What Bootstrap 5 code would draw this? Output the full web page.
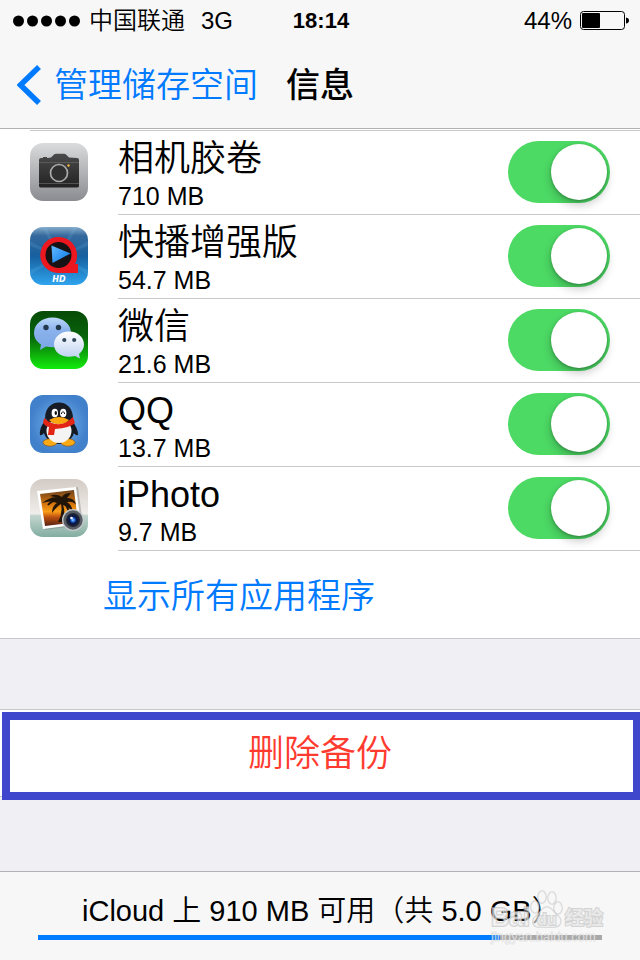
<!DOCTYPE html>
<html lang="zh-CN">
<head>
<meta charset="utf-8">
<meta name="viewport" content="width=device-width, initial-scale=1">
<title>信息</title>
<link href="https://cdn.jsdelivr.net/npm/bootstrap@5.3.0/dist/css/bootstrap.min.css" rel="stylesheet">
<style>
  body { font-family: "Liberation Sans", "Noto Sans CJK SC", sans-serif; font-weight: 350; color: #000; background: #efeff4; }
  a, a:hover { color: #007aff; text-decoration: none; }
  .top-area { background: #f7f7f7; border-bottom: 1px solid #b2b2b2; }
  .three-part { display: grid; grid-template-columns: 1fr auto 1fr; align-items: center; }
  .status-line { height: 40px; padding: 2px 11px 0 13px; font-size: 24px; line-height: 32px; }
  .status-time { font-size: 22px; font-weight: 700; }
  .title-line { height: 88px; padding: 2px 17px 0; font-size: 34px; line-height: 48px; }
  .back-link { gap: 12px; }
  .page-title { font-size: 34px; line-height: 48px; font-weight: 500; margin: 0; }
  .app-list { background: #fff; border-bottom: 1px solid #c8c7cc; padding-top: 1px; }
  .app-rows { border-top: 1px solid #c8c7cc; margin-left: 30px; }
  .app-row { gap: 30px; }
  .app-icon { width: 58px; height: 58px; display: block; margin-bottom: 2px; }
  .app-body { height: 84px; border-bottom: 1px solid #c8c7cc; padding-right: 30px; }
  .app-text { padding-top: 5px; }
  .app-name { font-size: 36px; line-height: 42px; }
  .app-size { font-size: 25px; line-height: 32px; }
  .big-switch.form-check-input { position: relative; display: block; float: none; width: 102px; height: 62px; margin: 0 0 2px; border: 0; border-radius: 31px; background: #d8d8d8; box-shadow: none; }
  .big-switch.form-check-input:checked { background: #4cd964; }
  .big-switch::before { content: ""; position: absolute; left: 3px; top: 3px; width: 56px; height: 56px; border-radius: 50%; background: #fff; box-shadow: 0 5px 10px rgba(0,0,0,.22), 0 1px 3px rgba(0,0,0,.25); }
  .big-switch:checked::before { left: 43px; }
  .show-all { padding: 21px 103px 18px; font-size: 34px; line-height: 48px; }
  .delete-area { margin-top: 70px; margin-bottom: 74px; background: #fff; border: solid #c8c7cc; border-width: 1px 0; }
  .delete-button { padding: 19px 18px 17px; font-size: 36px; line-height: 50px; font-weight: 350; color: #ff3b30; background: none; border: 0; }
  .focus-frame { position: absolute; inset: 2px 0 -4px 2px; border: 8px solid #3f48cc; border-right-width: 7px; pointer-events: none; }
  .storage { background: #f7f7f7; border-top: 1px solid #b2b2b2; padding: 19px 38px 20px; }
  .storage-text { font-size: 29px; line-height: 40px; padding-left: 44px; white-space: nowrap; }
  .storage .progress { height: 5px; margin-top: 4px; border-radius: 0; background: #a9a9a9; }
  .storage .progress-bar { background: #007aff; }
  .watermark { position: absolute; right: 34px; bottom: 11px; width: 116px; height: 60px; }
</style>
<script src="https://cdn.jsdelivr.net/npm/bootstrap@5.3.0/dist/js/bootstrap.bundle.min.js"></script>
</head>
<body class="d-flex flex-column min-vh-100">
<header class="top-area">
  <div class="status-line three-part">
    <div class="d-flex align-items-center">
      <svg width="68" height="12" aria-hidden="true"><circle cx="5.500" cy="6" r="5.500"/><circle cx="19.500" cy="6" r="5.500"/><circle cx="33.500" cy="6" r="5.500"/><circle cx="47.500" cy="6" r="5.500"/><circle cx="61.500" cy="6" r="5.500"/></svg>
      <span class="ms-2">中国联通</span><span class="ms-3">3G</span>
    </div>
    <div class="status-time">18:14</div>
    <div class="d-flex align-items-center justify-content-end gap-2">
      <span>44%</span>
      <svg width="49" height="20" aria-hidden="true"><rect x=".5" y=".5" width="44" height="18" rx="3" fill="none" stroke="#000"/><rect x="2" y="2" width="18" height="15" rx="1"/><path d="M46 6.500q3 .5 3 3t-3 3z"/></svg>
    </div>
  </div>
  <div class="title-line three-part">
    <a href="#" class="back-link d-flex align-items-center text-nowrap">
      <svg width="25" height="40" aria-hidden="true"><path d="M22 2 3.500 20 22 38" fill="none" stroke="#007aff" stroke-width="5.500"/></svg>管理储存空间</a>
    <h1 class="page-title">信息</h1>
  </div>
</header>
<main class="flex-grow-1">
  <section class="app-list">
    <div class="app-rows">
      <div class="app-row d-flex align-items-center">
        <svg class="app-icon" viewBox="0 0 58 58" aria-hidden="true">
          <defs>
            <linearGradient id="camBg" x2="0" y2="1"><stop stop-color="#dadbdc"/><stop offset="1" stop-color="#8b8c91"/></linearGradient>
            <linearGradient id="camBody" x2="0" y2="1"><stop stop-color="#4a4a4a"/><stop offset="1" stop-color="#222"/></linearGradient>
          </defs>
          <rect width="58" height="58" rx="13" fill="url(#camBg)"/>
          <path d="M13 15v-1h4v1l4-.5 3-3q1-.8 2-.8h8q1 0 2 .8l3 3 8 .5q2 0 2 2v26q0 1.500-2 1.500H11q-2 0-2-1.500V17q0-2 2-2z" fill="url(#camBody)"/>
          <path d="M9 19.500h40M9 40.500h40" stroke="#666" stroke-width=".7"/>
          <circle cx="29" cy="30" r="8.500" fill="#303030" stroke="#aaa" stroke-width="1.700"/><circle cx="38.500" cy="22.500" r="1.200" fill="#f4b63c"/>
        </svg>
        <div class="app-body d-flex align-items-center justify-content-between flex-grow-1">
          <div class="app-text"><label class="app-name d-block" for="sw1">相机胶卷</label><div class="app-size">710 MB</div></div>
          <div class="form-switch p-0 m-0"><input class="form-check-input big-switch" type="checkbox" role="switch" id="sw1" checked></div>
        </div>
      </div>
      <div class="app-row d-flex align-items-center">
        <svg class="app-icon" viewBox="0 0 58 58" aria-hidden="true">
          <defs>
            <linearGradient id="playBg" x2="0" y2="1"><stop stop-color="#86abc9"/><stop offset=".15" stop-color="#35699d"/><stop offset=".5" stop-color="#17609f"/><stop offset="1" stop-color="#2fa4ee"/></linearGradient>
            <linearGradient id="playTri" x2="1" y2="1"><stop stop-color="#64b9ff"/><stop offset="1" stop-color="#0877e8"/></linearGradient>
          </defs>
          <rect width="58" height="58" rx="13" fill="url(#playBg)"/>
          <path d="M29 30 0 14v5zM29 30 58 14v5zM29 30 0 43v5zM29 30l29 13v5zM29 30 12 0h5zM29 30 43 0h5z" fill="#8ad3ff" opacity=".12"/>
          <path d="M28.500 10a18.500 18.500 0 0 1 18 23q-.5 3-2 4h3.500v9H28a18 18 0 0 1 .5-36z" fill="#ed171f"/>
          <circle cx="28.500" cy="28" r="13" fill="#171314"/>
          <path d="m21.500 18.500 19 8-18 9.500z" fill="url(#playTri)"/>
          <text x="29" y="55" text-anchor="middle" font-size="8" font-weight="700" font-style="italic" font-family="DejaVu Sans, sans-serif" fill="#fff">HD</text>
        </svg>
        <div class="app-body d-flex align-items-center justify-content-between flex-grow-1">
          <div class="app-text"><label class="app-name d-block" for="sw2">快播增强版</label><div class="app-size">54.7 MB</div></div>
          <div class="form-switch p-0 m-0"><input class="form-check-input big-switch" type="checkbox" role="switch" id="sw2" checked></div>
        </div>
      </div>
      <div class="app-row d-flex align-items-center">
        <svg class="app-icon" viewBox="0 0 58 58" aria-hidden="true">
          <defs>
            <linearGradient id="chatBg" x2="0" y2="1"><stop stop-color="#064b08"/><stop offset=".45" stop-color="#08640a"/><stop offset="1" stop-color="#13ec0c"/></linearGradient>
            <linearGradient id="chatBlue" x2="0" y2="1"><stop stop-color="#bcd8fb"/><stop offset=".4" stop-color="#8ab2ec"/><stop offset="1" stop-color="#7ba6e5"/></linearGradient>
            <linearGradient id="chatWhite" x2="0" y2="1"><stop stop-color="#fff"/><stop offset="1" stop-color="#bdd1f2"/></linearGradient>
          </defs>
          <rect width="58" height="58" rx="13" fill="url(#chatBg)"/>
          <path d="M22.500 6.500C12 6.500 4 13 4 22c0 5 3 9 7 11.500L10 39l6-3.500c13 3 25-4 25-13.500 0-9-8-15.500-18.500-15.500z" fill="url(#chatBlue)"/>
          <circle cx="16" cy="16.500" r="2.700" fill="#21384f"/><circle cx="28.500" cy="16.500" r="2.700" fill="#21384f"/>
          <path d="M39 20.500c9 0 15 6 15 13 0 4-2 7-5 9.500l1 4.500-5-2.500c-12 3-21-3-21-11.500 0-7 6-13 15-13z" fill="url(#chatWhite)"/>
          <circle cx="34.300" cy="29" r="2.100" fill="#34495d"/><circle cx="44.200" cy="29" r="2.100" fill="#34495d"/>
        </svg>
        <div class="app-body d-flex align-items-center justify-content-between flex-grow-1">
          <div class="app-text"><label class="app-name d-block" for="sw3">微信</label><div class="app-size">21.6 MB</div></div>
          <div class="form-switch p-0 m-0"><input class="form-check-input big-switch" type="checkbox" role="switch" id="sw3" checked></div>
        </div>
      </div>
      <div class="app-row d-flex align-items-center">
        <svg class="app-icon" viewBox="0 0 58 58" aria-hidden="true">
          <defs><radialGradient id="qqBg"><stop stop-color="#78b3ee"/><stop offset="1" stop-color="#4180cb"/></radialGradient></defs>
          <rect width="58" height="58" rx="13" fill="url(#qqBg)"/>
          <path d="M15 26q-6 7-5 14 3 1 6-5zM42 26q6 7 6 14-3 1-7-5z" fill="#141922"/>
          <ellipse cx="29" cy="34" rx="15.500" ry="15" fill="#141922"/>
          <ellipse cx="20" cy="47.500" rx="7" ry="3.700" fill="#f9a914" stroke="#8c4c08" stroke-width=".6"/><ellipse cx="38" cy="47.500" rx="7" ry="3.700" fill="#f9a914" stroke="#8c4c08" stroke-width=".6"/>
          <ellipse cx="29" cy="36" rx="12.500" ry="12" fill="#f4f4f4"/>
          <path d="M29 7.500c-8 0-14 6-14 16q14 10 28 0c0-10-6-16-14-16z" fill="#181c25"/>
          <ellipse cx="24.800" cy="18" rx="3.200" ry="4.300" fill="#fff"/><ellipse cx="33.200" cy="18" rx="3.200" ry="4.300" fill="#fff"/>
          <ellipse cx="25.800" cy="18" rx="1.200" ry="2" fill="#111"/><path d="M31.500 19v-1q1.500-3 3 0v1" fill="none" stroke="#111"/>
          <path d="M14 23q15 13 29-1l2 6q-5 5-20 6l-1 6h-6l1-8q-4-1-6-4z" fill="#e32516"/>
          <path d="M19 25q10-6 20 0-4 4-10 4T19 25z" fill="#fca50e"/>
        </svg>
        <div class="app-body d-flex align-items-center justify-content-between flex-grow-1">
          <div class="app-text"><label class="app-name d-block" for="sw4">QQ</label><div class="app-size">13.7 MB</div></div>
          <div class="form-switch p-0 m-0"><input class="form-check-input big-switch" type="checkbox" role="switch" id="sw4" checked></div>
        </div>
      </div>
      <div class="app-row d-flex align-items-center">
        <svg class="app-icon" viewBox="0 0 58 58" aria-hidden="true">
          <defs>
            <linearGradient id="photoBg" x2="0" y2="1"><stop stop-color="#d3cbc5"/><stop offset=".6" stop-color="#f0eeea"/><stop offset=".63" stop-color="#c3d5ce"/><stop offset="1" stop-color="#82ada0"/></linearGradient>
            <linearGradient id="sunset" x2="0" y2="1"><stop stop-color="#70421d"/><stop offset=".4" stop-color="#d7770c"/><stop offset=".6" stop-color="#fb9e18"/><stop offset=".75" stop-color="#bd5011"/><stop offset="1" stop-color="#552112"/></linearGradient>
            <radialGradient id="lens"><stop stop-color="#a9dcff"/><stop offset=".25" stop-color="#226de5"/><stop offset=".5" stop-color="#08164a"/><stop offset="1" stop-color="#24272d"/></radialGradient>
          </defs>
          <rect width="58" height="58" rx="13" fill="url(#photoBg)"/>
          <path d="m9 13 39-5 5 38-38 5z" fill="#777" opacity=".4"/>
          <path d="m7 12 39-4 5 37-38 5z" fill="#fff"/>
          <path d="m10 15 34-4 4 32-33 4z" fill="url(#sunset)"/>
          <path d="M31 20q-7-5-19 4 9-3 15 0-5 3-5 10 5-7 9-9 2 9-3 18h4q4-9 1-17 5 1 10 7-1-7-6-10 6-1 9 3-1-7-9-7l4-5q-7 0-9 4-6-4-12-1 7 1 11 3z" fill="#211408"/>
          <path d="M31 23q5 0 8 10M28 21q-7 1-10 5" stroke="#211408" stroke-width="2" fill="none"/>
          <circle cx="43" cy="41" r="11" fill="#c5c8ca"/><circle cx="43" cy="41" r="9.700" fill="#565c63"/><circle cx="43" cy="41" r="7" fill="url(#lens)"/><circle cx="41.500" cy="39" r="1.300" fill="#fff"/>
        </svg>
        <div class="app-body d-flex align-items-center justify-content-between flex-grow-1">
          <div class="app-text"><label class="app-name d-block" for="sw5">iPhoto</label><div class="app-size">9.7 MB</div></div>
          <div class="form-switch p-0 m-0"><input class="form-check-input big-switch" type="checkbox" role="switch" id="sw5" checked></div>
        </div>
      </div>
    </div>
    <a href="#" class="show-all d-block">显示所有应用程序</a>
  </section>
  <section class="delete-area position-relative">
    <button type="button" class="delete-button w-100 d-block">删除备份</button>
    <div class="focus-frame"></div>
  </section>
</main>
<footer class="storage position-relative">
  <div class="storage-text">iCloud 上 910 MB 可用（共 5.0 GB）</div>
  <div class="progress" role="progressbar" aria-label="iCloud" aria-valuenow="82" aria-valuemin="0" aria-valuemax="100"><div class="progress-bar" style="width:82%"></div></div>
  <svg class="watermark" viewBox="0 0 116 60" fill="#f7f7f7" fill-opacity=".6" stroke="#bbb" stroke-opacity=".6" stroke-width="2" paint-order="stroke" font-family="Liberation Sans, Noto Sans CJK SC, sans-serif" font-weight="700">
    <text x="1" y="37" font-size="25">Bai</text>
    <g stroke-width="1.500"><ellipse cx="45" cy="18" rx="4" ry="6"/><ellipse cx="52" cy="8" rx="4" ry="6"/><ellipse cx="62" cy="9" rx="4" ry="6"/><ellipse cx="68" cy="19" rx="4" ry="6"/><path d="M57 18c5 0 7 6 11 9 5 4 3 11-4 11H49c-7 0-8-7-3-11 4-3 6-9 11-9z"/></g>
    <text x="47" y="36" font-size="16">du</text>
    <text x="75" y="36" font-size="19">经验</text>
    <text x="1" y="52" font-size="13" font-weight="400" stroke-width="1" stroke-opacity=".4">jingyan.baidu.com</text>
  </svg>
</footer>
</body>
</html>
